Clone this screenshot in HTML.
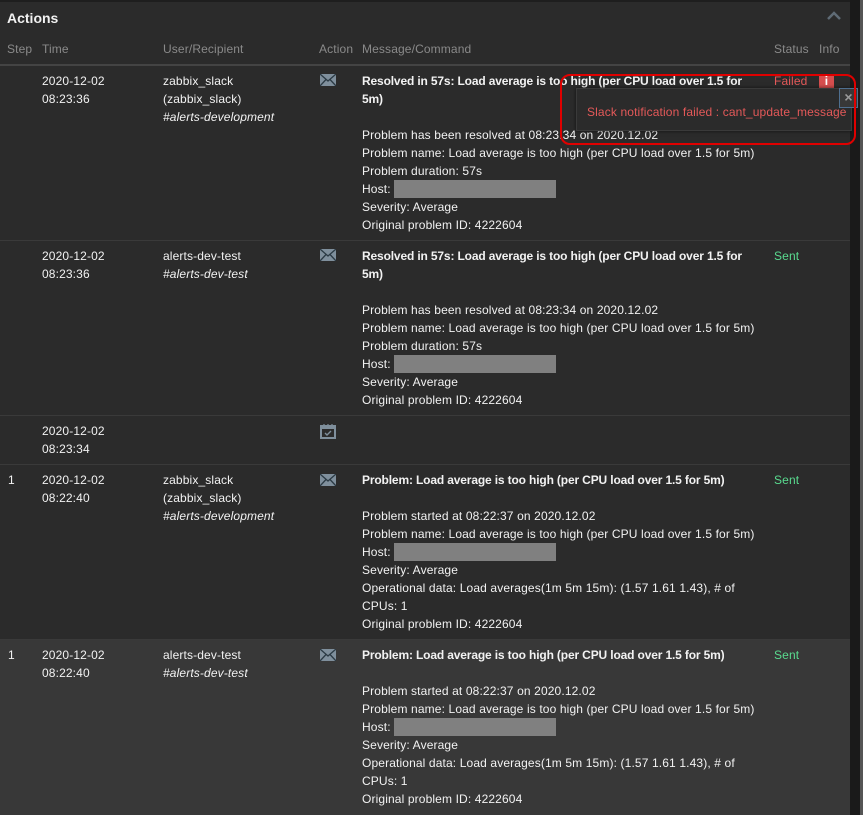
<!DOCTYPE html>
<html><head><meta charset="utf-8"><style>
*{margin:0;padding:0;box-sizing:border-box}
body{width:863px;height:815px;background:#1a1a1a;font-family:"Liberation Sans",Arial,sans-serif;font-size:12px;color:#f2f2f2;position:relative;overflow:hidden;letter-spacing:0.13px}
#panel{position:absolute;left:0;top:0;width:850px;height:815px;background:#2b2b2b;border-top:2px solid #1e1e1e}
#sb{position:absolute;left:860px;top:0;width:3px;height:815px;background:#555}
.a{position:absolute;line-height:18px;white-space:nowrap}
.h{color:#8a8a8a}
.b{font-weight:bold;letter-spacing:-0.15px}
.i{font-style:italic}
.sep{position:absolute;left:0;width:850px;height:1px;background:#3a3a3a}
.g{display:inline-block;width:162px;height:18px;background:#808080;vertical-align:top}
.sent{color:#59db8f}
.ic{position:absolute}
</style></head><body>
<div id="panel"></div>
<div id="sb"></div>
<div class="a b" style="left:7px;top:9px;font-size:14px;color:#f2f2f2;letter-spacing:0">Actions</div>
<svg class="ic" style="left:826px;top:11px" width="16" height="10"><path d="M2 8 L8 2 L14 8" fill="none" stroke="#5f6b75" stroke-width="2.5"/></svg>
<div class="a h" style="left:7px;top:40px">Step</div>
<div class="a h" style="left:42px;top:40px">Time</div>
<div class="a h" style="left:163px;top:40px">User/Recipient</div>
<div class="a h" style="left:319px;top:40px">Action</div>
<div class="a h" style="left:362px;top:40px">Message/Command</div>
<div class="a h" style="left:774px;top:40px">Status</div>
<div class="a h" style="left:819px;top:40px">Info</div>
<div class="sep" style="top:64px;height:2px;background:#444"></div>

<!-- row1 -->
<div class="a" style="left:42px;top:72px">2020-12-02<br>08:23:36</div>
<div class="a" style="left:163px;top:72px">zabbix_slack<br>(zabbix_slack)<br><span class="i">#alerts-development</span></div>
<svg class="ic" style="left:320px;top:74px" width="16" height="12"><rect width="16" height="12" fill="#7f8f9c"/><path d="M0 0 L8 7 L16 0 M0 12 L6 5.5 M16 12 L10 5.5" fill="none" stroke="#2b3a44" stroke-width="1.3"/></svg>
<div class="a" style="left:362px;top:72px"><span class="b">Resolved in 57s: Load average is too high (per CPU load over 1.5 for<br>5m)</span><br><br>Problem has been resolved at 08:23:34 on 2020.12.02<br>Problem name: Load average is too high (per CPU load over 1.5 for 5m)<br>Problem duration: 57s<br>Host: <span class="g"></span><br>Severity: Average<br>Original problem ID: 4222604</div>
<div class="a" style="left:774px;top:72px;color:#e45959">Failed</div>
<div class="ic" style="left:819px;top:74px;width:15px;height:14px;background:#d64e4e;color:#fff;font-weight:bold;font-size:12px;line-height:14px;text-align:center">i</div>
<div class="sep" style="top:240px"></div>

<!-- row2 -->
<div class="a" style="left:42px;top:247px">2020-12-02<br>08:23:36</div>
<div class="a" style="left:163px;top:247px">alerts-dev-test<br><span class="i">#alerts-dev-test</span></div>
<svg class="ic" style="left:320px;top:249px" width="16" height="12"><rect width="16" height="12" fill="#7f8f9c"/><path d="M0 0 L8 7 L16 0 M0 12 L6 5.5 M16 12 L10 5.5" fill="none" stroke="#2b3a44" stroke-width="1.3"/></svg>
<div class="a" style="left:362px;top:247px"><span class="b">Resolved in 57s: Load average is too high (per CPU load over 1.5 for<br>5m)</span><br><br>Problem has been resolved at 08:23:34 on 2020.12.02<br>Problem name: Load average is too high (per CPU load over 1.5 for 5m)<br>Problem duration: 57s<br>Host:<span class="g" style="margin-left:3px"></span><br>Severity: Average<br>Original problem ID: 4222604</div>
<div class="a sent" style="left:774px;top:247px">Sent</div>
<div class="sep" style="top:415px"></div>

<!-- row3 -->
<div class="a" style="left:42px;top:422px">2020-12-02<br>08:23:34</div>
<svg class="ic" style="left:320px;top:423px" width="16" height="16"><rect x="1" y="3" width="14" height="12" fill="none" stroke="#7f8f9c" stroke-width="2"/><rect x="1" y="3" width="14" height="3" fill="#7f8f9c"/><path d="M4 1v3M8 1v3M12 1v3" stroke="#7f8f9c" stroke-width="1.2"/><path d="M5 10 L7 12 L11 8" fill="none" stroke="#7f8f9c" stroke-width="1.4"/></svg>
<div class="sep" style="top:464px"></div>

<!-- row4 -->
<div class="a" style="left:8px;top:471px">1</div>
<div class="a" style="left:42px;top:471px">2020-12-02<br>08:22:40</div>
<div class="a" style="left:163px;top:471px">zabbix_slack<br>(zabbix_slack)<br><span class="i">#alerts-development</span></div>
<svg class="ic" style="left:320px;top:474px" width="16" height="12"><rect width="16" height="12" fill="#7f8f9c"/><path d="M0 0 L8 7 L16 0 M0 12 L6 5.5 M16 12 L10 5.5" fill="none" stroke="#2b3a44" stroke-width="1.3"/></svg>
<div class="a" style="left:362px;top:471px"><span class="b">Problem: Load average is too high (per CPU load over 1.5 for 5m)</span><br><br>Problem started at 08:22:37 on 2020.12.02<br>Problem name: Load average is too high (per CPU load over 1.5 for 5m)<br>Host:<span class="g" style="margin-left:3px"></span><br>Severity: Average<br>Operational data: Load averages(1m 5m 15m): (1.57 1.61 1.43), # of<br>CPUs: 1<br>Original problem ID: 4222604</div>
<div class="a sent" style="left:774px;top:471px">Sent</div>
<div class="sep" style="top:639px"></div>

<!-- row5 -->
<div style="position:absolute;left:0;top:640px;width:850px;height:175px;background:#383838"></div>
<div class="a" style="left:8px;top:646px">1</div>
<div class="a" style="left:42px;top:646px">2020-12-02<br>08:22:40</div>
<div class="a" style="left:163px;top:646px">alerts-dev-test<br><span class="i">#alerts-dev-test</span></div>
<svg class="ic" style="left:320px;top:649px" width="16" height="12"><rect width="16" height="12" fill="#7f8f9c"/><path d="M0 0 L8 7 L16 0 M0 12 L6 5.5 M16 12 L10 5.5" fill="none" stroke="#2b3a44" stroke-width="1.3"/></svg>
<div class="a" style="left:362px;top:646px"><span class="b">Problem: Load average is too high (per CPU load over 1.5 for 5m)</span><br><br>Problem started at 08:22:37 on 2020.12.02<br>Problem name: Load average is too high (per CPU load over 1.5 for 5m)<br>Host:<span class="g" style="margin-left:3px"></span><br>Severity: Average<br>Operational data: Load averages(1m 5m 15m): (1.57 1.61 1.43), # of<br>CPUs: 1<br>Original problem ID: 4222604</div>
<div class="a sent" style="left:774px;top:646px">Sent</div>

<!-- popup -->
<div style="position:absolute;left:576px;top:88px;width:276px;height:43px;background:#2b2b2b;border:1px solid #3a3a3a;box-shadow:0 0 4px rgba(0,0,0,.6)"></div>
<div class="a" style="left:587px;top:103px;color:#e45959">Slack notification failed : cant_update_message</div>
<div style="position:absolute;left:839px;top:88px;width:19px;height:20px;background:#383838;border:1px solid #4f6f8f;color:#9a9a9a;font-weight:bold;font-size:14px;line-height:17px;text-align:center">×</div>
<div style="position:absolute;left:560px;top:74px;width:296px;height:71px;border:2px solid #e00000;border-radius:10px"></div>
</body></html>
